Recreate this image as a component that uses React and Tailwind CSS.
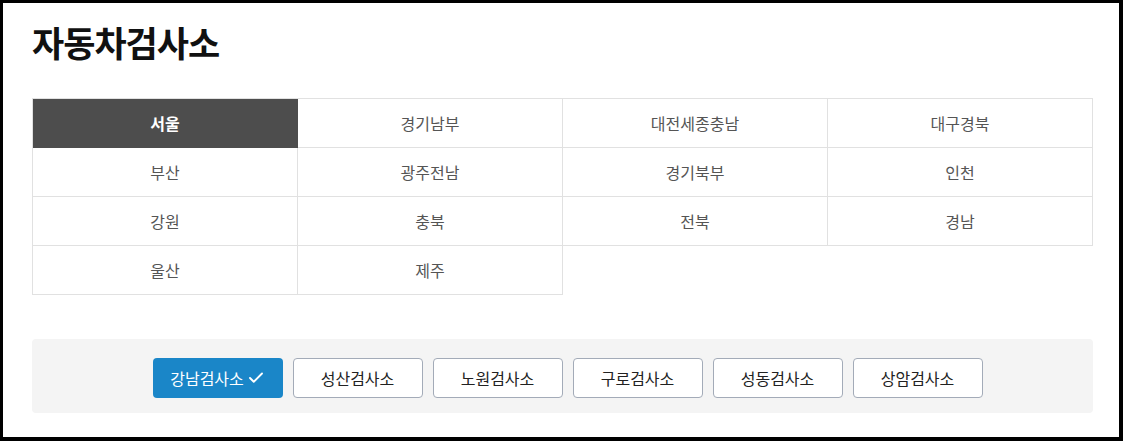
import { Check } from "lucide-react";

const regions = [
  "서울",
  "경기남부",
  "대전세종충남",
  "대구경북",
  "부산",
  "광주전남",
  "경기북부",
  "인천",
  "강원",
  "충북",
  "전북",
  "경남",
  "울산",
  "제주",
];

const centers = ["강남검사소", "성산검사소", "노원검사소", "구로검사소", "성동검사소", "상암검사소"];

export default function App() {
  const activeRegion = "서울";
  const activeCenter = "강남검사소";

  return (
    <div
      className="h-[441px] w-[1123px] overflow-hidden border-t-[3px] border-l-[3px] border-r-4 border-b-4 border-black bg-white"
      style={{ fontFamily: '"Noto Sans CJK KR", "Noto Sans", sans-serif' }}
    >
      <div className="w-[1061px] pl-[29px] box-content">
        <h1 className="pt-[16px] text-[35px] font-bold leading-[46px] tracking-[-1px] text-[#111]">
          자동차검사소
        </h1>

        <ul className="mt-[33px] grid grid-cols-4 border-l border-t border-[#e1e1e1]">
          {regions.map((name) => {
            const active = name === activeRegion;
            return (
              <li
                key={name}
                className={
                  active
                    ? "flex h-[49px] items-center justify-center border-b border-r border-[#4d4d4d] bg-[#4d4d4d] text-[16px] font-bold text-white"
                    : "flex h-[49px] items-center justify-center border-b border-r border-[#e1e1e1] text-[16px] text-[#555]"
                }
              >
                {name}
              </li>
            );
          })}
        </ul>

        <div className="mt-[44px] flex h-[74px] items-start justify-center rounded-[4px] bg-[#f4f4f4] pt-[19px]">
          {centers.map((name) => {
            const active = name === activeCenter;
            return (
              <button
                key={name}
                type="button"
                className={
                  active
                    ? "ml-[10px] flex h-[40px] w-[130px] items-center justify-center gap-[3px] rounded-[4px] bg-[#1a86c8] text-[16px] text-white"
                    : "ml-[10px] flex h-[40px] w-[130px] items-center justify-center rounded-[4px] border border-[#a3abb8] bg-white text-[16px] text-[#222]"
                }
              >
                {name}
                {active && <Check size={18} strokeWidth={2.5} />}
              </button>
            );
          })}
        </div>
      </div>
    </div>
  );
}
